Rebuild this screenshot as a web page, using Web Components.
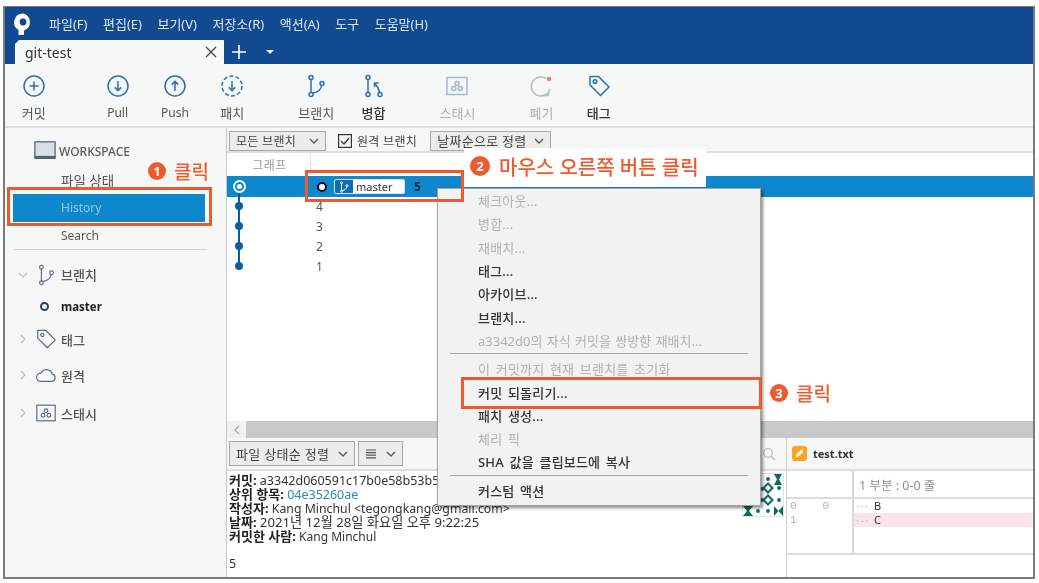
<!DOCTYPE html>
<html lang="ko">
<head>
<meta charset="utf-8">
<title>git-test</title>
<style>
  html, body { margin: 0; height: 100%; background: #fff; overflow: hidden; }
  body { font-family: "Noto Sans", "Noto Sans CJK KR", sans-serif; font-size: 12px; color: #444; }
</style>
</head>
<body>
<app-window>
  <title-bar></title-bar>
  <tool-bar>
    <tool-button icon="plus" label="커밋"></tool-button>
    <tool-button icon="pull" label="Pull" wide></tool-button>
    <tool-button icon="push" label="Push"></tool-button>
    <tool-button icon="patch" label="패치"></tool-button>
    <tool-button icon="branch" label="브랜치" wide></tool-button>
    <tool-button icon="merge" label="병합" strong></tool-button>
    <tool-button icon="stash" label="스태시" wide off></tool-button>
    <tool-button icon="discard" label="폐기" wide off></tool-button>
    <tool-button icon="tag" label="태그" strong></tool-button>
  </tool-bar>
  <div style="display:flex;flex:1;min-height:0">
    <side-bar></side-bar>
    <div style="display:flex;flex-direction:column;flex:1;min-width:0">
      <filter-bar></filter-bar>
      <history-list></history-list>
      <h-scroll></h-scroll>
      <div style="display:flex;flex:none;height:139px">
        <commit-detail></commit-detail>
        <diff-pane></diff-pane>
      </div>
    </div>
  </div>

  <callout-box style="left:2px;top:180px;width:205px;height:39px"></callout-box>
  <callout-box style="left:300px;top:163px;width:159px;height:32px"></callout-box>
  <callout-label num="❶" style="left:139px;top:148px">클릭</callout-label>

  <context-menu style="left:432px;top:181px"></context-menu>
  <callout-box style="left:456px;top:370px;width:301px;height:32px"></callout-box>
  <callout-label num="❸" style="left:761px;top:370px">클릭</callout-label>
  <callout-label num="❷" big style="left:459px;top:141px;width:242px;height:39px">마우스 오른쪽 버튼 클릭</callout-label>
</app-window>

<script>
const BLUE = '#2b70b4';
const ICONS = {
  plus: `<circle cx="12" cy="12" r="10"/><path d="M12 7.500v9M7.500 12h9"/>`,
  pull: `<circle cx="12" cy="12" r="10"/><path d="M12 7v9.500M8.800 13.400l3.200 3.200 3.200-3.200"/>`,
  push: `<circle cx="12" cy="12" r="10"/><path d="M12 17V7.500M8.800 10.600L12 7.400l3.200 3.200"/>`,
  patch: `<circle cx="12" cy="12" r="10" stroke-dasharray="4 2.300"/><path d="M12 7v9.500M8.800 13.400l3.200 3.200 3.200-3.200"/>`,
  branch: `<circle cx="7" cy="3.500" r="2"/><circle cx="7" cy="20.500" r="2"/><circle cx="18" cy="9.500" r="2"/><path d="M7 5.500v13M8.600 19.200c5-1 8.600-4 9-7.700"/>`,
  merge: `<circle cx="6" cy="3.500" r="2"/><circle cx="6" cy="20.500" r="2"/><circle cx="18" cy="20.500" r="2"/><path d="M6 5.500v13M17.600 18.500C17 15 15.500 12.500 13 9.500M12.500 13V9h4"/>`,
  stash: `<rect x="2" y="3.500" width="20" height="17"/><circle cx="12" cy="9.500" r="2"/><circle cx="8.800" cy="14.500" r="2"/><circle cx="15.200" cy="14.500" r="2"/>`,
  discard: `<path d="M17 4.500A9.500 9.500 0 1 0 21 15"/><path d="M12.500 21.500h6.500l1-5"/><circle cx="20" cy="5" r="2.300" fill="#f0806a" stroke="none"/>`,
  tag: `<path d="M3 2.500h8.500L22 13l-8.500 8.500L3 11z" stroke-linejoin="round"/><circle cx="8" cy="7.500" r="1.800"/>`,
  cloud: `<path d="M6 19h12a4 4 0 0 0 .8-7.900A6.500 6.500 0 0 0 6.500 10 4.500 4.500 0 0 0 6 19z"/>`,
  monitor: `<rect x="1" y="2" width="22" height="16" fill="#d9dee6"/><path d="M1 18h22v2H1z" fill="#5d6b80"/>`
};

class uiIcon extends HTMLElement {
  constructor() {
    super();
    this.attachShadow({ mode: "open" });
  }
  connectedCallback() {
    const size = this.getAttribute('size') || 24;
    const color = this.getAttribute('color') || BLUE;
    const sw = this.getAttribute('sw') || 1.5;
    this.shadowRoot.innerHTML = `
      <style>:host{display:inline-flex;flex:none;width:${size}px;height:${size}px} svg{display:block}</style>
      <svg width="${size}" height="${size}" viewBox="0 0 24 24" fill="none" stroke="${color}" stroke-width="${sw}">${ICONS[this.getAttribute('name')]}</svg>`;
  }
}
customElements.define("ui-icon", uiIcon);

class appWindow extends HTMLElement {
  constructor() {
    super();
    this.attachShadow({ mode: "open" }).innerHTML = `
      <style>
        :host{
          display:flex;
          flex-direction:column;
          position:relative;
          box-sizing:border-box;
          width:1032px;
          height:573px;
          margin:6px 0 0 3px;
          border:solid #7b7b7b;
          border-width:1px 2px 2px 2px;
          background:#fff;
          filter:blur(.4px);
        }
      </style>
      <slot></slot>`;
  }
}
customElements.define("app-window", appWindow);

class titleBar extends HTMLElement {
  constructor() {
    super();
    const items = ['파일(F)','편집(E)','보기(V)','저장소(R)','액션(A)','도구','도움말(H)'];
    this.attachShadow({ mode: "open" }).innerHTML = `
      <style>
        :host{display:block;flex:none;height:57px;background:#114a91;color:#dfe8f3}
        .menu{display:flex;align-items:center;height:33px;padding-left:7px;font-size:13px}
        .menu svg{margin-right:15px}
        .menu span{margin-right:15.500px;white-space:nowrap}
        .tabs{display:flex;align-items:center;height:24px;padding-left:10px;color:#fff}
        .tab{
          display:flex;align-items:center;justify-content:space-between;
          box-sizing:border-box;width:209px;height:24px;padding:0 7px 0 10px;
          background:#f6f8f7;color:#333;font-size:14px;
          clip-path:polygon(4px 0,100% 0,100% 100%,0 100%,0 4px);
        }
        .plus{margin-left:7px}
        .drop{margin-left:19px;width:0;height:0;border:4px solid transparent;border-top-color:#e8eef6;border-bottom:0}
      </style>
      <div class="menu">
        <svg width="22" height="24" viewBox="0 0 22 24">
          <path d="M11 1.500a8.800 8.800 0 0 0-4.500 16.400V23h5.500v-4.600A8.800 8.800 0 0 0 11 1.500z" fill="#fff"/>
          <circle cx="11" cy="10" r="3.400" fill="#114a91"/>
        </svg>
        ${items.map(i => `<span>${i}</span>`).join('')}
      </div>
      <div class="tabs">
        <div class="tab">git-test
          <svg width="12" height="12" viewBox="0 0 12 12" stroke="#444" stroke-width="1.300"><path d="M1 1l10 10M11 1L1 11"/></svg>
        </div>
        <svg class="plus" width="16" height="16" viewBox="0 0 16 16" stroke="#fff" stroke-width="1.600"><path d="M8 1v14M1 8h14"/></svg>
        <div class="drop"></div>
      </div>`;
  }
}
customElements.define("title-bar", titleBar);

class toolBar extends HTMLElement {
  constructor() {
    super();
    this.attachShadow({ mode: "open" }).innerHTML = `
      <style>
        :host{display:flex;flex:none;box-sizing:border-box;height:64px;background:#f6f8f7;border-bottom:2px solid #dedede}
      </style>
      <slot></slot>`;
  }
}
customElements.define("tool-bar", toolBar);

class toolButton extends HTMLElement {
  constructor() {
    super();
    this.attachShadow({ mode: "open" });
  }
  connectedCallback() {
    const off = this.hasAttribute('off');
    const name = this.getAttribute('icon');
    const text = this.getAttribute('label');
    let color = off ? '#9db9d6' : BLUE;
    if (name === 'discard') color = '#b9bdc0';
    const label = off ? '#adadad' : this.hasAttribute('strong') ? '#333' : '#555';
    this.shadowRoot.innerHTML = `
      <style>
        :host{
          display:flex;flex-direction:column;align-items:center;flex:none;
          width:57.300px;padding-top:10px;box-sizing:border-box;
          margin-left:${this.hasAttribute('wide') ? 26.700 : 0}px;
        }
        span{margin-top:7px;font-size:${/[가-힣]/.test(text) ? 13 : 12}px;line-height:16px;color:${label};font-weight:${this.hasAttribute('strong') ? 500 : 400}}
      </style>
      <ui-icon name="${name}" color="${color}"></ui-icon>
      <span>${text}</span>`;
  }
}
customElements.define("tool-button", toolButton);

class sideBar extends HTMLElement {
  constructor() {
    super();
    const chev = (open) => `<svg class="chev" width="10" height="10" viewBox="0 0 10 10" fill="none" stroke="#bbb" stroke-width="1.200"><path d="${open ? 'M1 3l4 4 4-4' : 'M3 1l4 4-4 4'}"/></svg>`;
    this.attachShadow({ mode: "open" }).innerHTML = `
      <style>
        :host{display:block;flex:none;box-sizing:border-box;width:222px;padding-top:10px;background:#f6f8f7;border-right:1px solid #c8c8c8;color:#555}
        .row{display:flex;align-items:center}
        .ws{height:26px;margin-bottom:2.500px;padding-left:29px;gap:3px;font-size:12px;font-weight:500;color:#5b5b5b}
        .item{height:27.500px;padding-left:56px;font-size:12px}
        .sel{margin:0 21px 0 8px;padding-left:48px;background:#0f87cc;color:#93c9ea}
        hr{margin:0 19px 0 9px;border:0;border-top:1px solid #d4d4d4;height:0}
        .head{padding-left:13px;font-size:13px;font-weight:500;color:#555}
        .chev{margin-right:7px}
        .head ui-icon{margin-right:4px}
        .master{height:32px;padding-left:35px;gap:12px;color:#222;font-weight:700;font-size:11.500px}
        .dot{width:5px;height:5px;border:2px solid #2c4160;border-radius:50%}
      </style>
      <div class="row ws"><ui-icon name="monitor" color="#4d5c72" size="22" sw="1.300"></ui-icon>WORKSPACE</div>
      <div class="row item" style="font-size:13.500px">파일 상태</div>
      <div class="row item sel">History</div>
      <div class="row item">Search</div>
      <hr>
      <div class="row head" style="height:31px;margin-top:9px">${chev(true)}<ui-icon name="branch" color="#5c6c84" size="22" sw="1.300"></ui-icon>브랜치</div>
      <div class="row master"><span class="dot"></span>master</div>
      <div class="row head" style="height:34px">${chev()}<ui-icon name="tag" color="#5c6c84" size="22" sw="1.300"></ui-icon>태그</div>
      <div class="row head" style="height:38px">${chev()}<ui-icon name="cloud" color="#5c6c84" size="22" sw="1.300"></ui-icon>원격</div>
      <div class="row head" style="height:38px">${chev()}<ui-icon name="stash" color="#5c6c84" size="22" sw="1.300"></ui-icon>스태시</div>`;
  }
}
customElements.define("side-bar", sideBar);

const BTN_STYLES = `
  .btn{
    display:inline-flex;align-items:center;justify-content:space-between;box-sizing:border-box;
    border:1px solid #a9a9a9;background:#ececec;color:#444;font-size:12px;letter-spacing:.3px;white-space:nowrap;
  }
`;
const DOWN = `<svg width="10" height="10" viewBox="0 0 10 10" fill="none" stroke="#555" stroke-width="1.300"><path d="M1 3l4 4 4-4"/></svg>`;

class filterBar extends HTMLElement {
  constructor() {
    super();
    this.attachShadow({ mode: "open" }).innerHTML = `
      <style>
        ${BTN_STYLES}
        :host{display:flex;align-items:center;flex:none;box-sizing:border-box;height:25px;padding:2px 0 0 2px;background:#f6f8f7;border-bottom:2px solid #dedede}
        .btn{height:20px;padding:0 6px}
        .check{display:flex;align-items:center;gap:5px;margin:0 13px 0 12px;font-size:12px;letter-spacing:.3px;color:#444}
        .box{width:14px;height:14px}
      </style>
      <div class="btn" style="width:97px">모든 브랜치 ${DOWN}</div>
      <div class="check">
        <svg class="box" viewBox="0 0 14 14" fill="none" stroke="#333" stroke-width="1.200"><rect x=".6" y=".6" width="12.800" height="12.800"/><path d="M3 7l3 3 5-6"/></svg>
        원격 브랜치
      </div>
      <div class="btn" style="width:121px;font-size:13px">날짜순으로 정렬 ${DOWN}</div>`;
  }
}
customElements.define("filter-bar", filterBar);

class historyList extends HTMLElement {
  constructor() {
    super();
    const rows = ['4','3','2','1'];
    this.attachShadow({ mode: "open" }).innerHTML = `
      <style>
        :host{display:block;flex:1;min-height:0;background:#fff;color:#555}
        .head{display:grid;grid-template-columns:84px 1fr;height:22px;margin-bottom:1px;color:#999;font-size:12px;letter-spacing:.5px}
        .head div:first-child{display:flex;align-items:center;justify-content:center;border-right:1px solid #e2e2e2;padding:2px 0 0 2px}
        .row{display:grid;grid-template-columns:84px 1fr;align-items:center;height:20px;font-size:12px}
        .sel{background:#0f87cc;height:21px;margin-bottom:-1px;position:relative}
        .g{position:relative;height:100%;display:flex;align-items:center;padding-left:8px}
        .dot{width:8px;height:8px;border-radius:50%;background:#0b5f9e;position:relative;z-index:1}
        .g::before{content:"";position:absolute;left:11px;width:2px;top:-10px;height:20px;background:#0b5f9e}
        .first .g::before{top:-3px;height:13px}
        .sel .g::before{display:none}
        .ring{box-sizing:border-box;width:13px;height:13px;margin-left:-2.500px;border:2px solid #fff;border-radius:50%;display:flex;align-items:center;justify-content:center}
        .ring i{width:5px;height:5px;background:#fff;border-radius:50%}
        .t{padding-left:5px}
        .info{display:flex;align-items:center;padding-left:6px;color:#12283c}
        .cur{box-sizing:border-box;width:10px;height:10px;border:2.500px solid #111;background:#fff;border-radius:50%;margin-right:7px}
        .chip{display:flex;align-items:center;box-sizing:border-box;width:71px;height:15px;background:#fff;border:1px solid #cfe3f1;border-radius:2px;font-size:11px;color:#333;margin-right:9px;overflow:hidden}
        .chip b{display:flex;align-items:center;justify-content:center;width:18px;height:100%;background:#0f6eaf;margin-right:3px}
        .num{font-weight:700;color:#12283c}
      </style>
      <div class="head"><div>그래프</div><div></div></div>
      <div class="row sel">
        <div class="g"><span class="ring"><i></i></span></div>
        <div class="info"><span class="cur"></span><span class="chip"><b><ui-icon name="branch" size="12" color="#fff" sw="2"></ui-icon></b>master</span><span class="num">5</span></div>
      </div>
      ${rows.map((r, n) => `<div class="row${n ? '' : ' first'}"><div class="g"><span class="dot"></span></div><div class="t">${r}</div></div>`).join('')}`;
  }
}
customElements.define("history-list", historyList);

class hScroll extends HTMLElement {
  constructor() {
    super();
    this.attachShadow({ mode: "open" }).innerHTML = `
      <style>
        :host{display:flex;flex:none;height:17px;background:#c9c9c9}
        div{display:flex;align-items:center;justify-content:center;width:19px;background:#f1f1f1}
      </style>
      <div><svg width="8" height="10" viewBox="0 0 8 10" fill="none" stroke="#aaa" stroke-width="1.300"><path d="M6 1L2 5l4 4"/></svg></div>`;
  }
}
customElements.define("h-scroll", hScroll);

class commitDetail extends HTMLElement {
  constructor() {
    super();
    const teal = '#0c6a58';
    // only the right part of the identicon shows past the menu
    const dots = [[26,6],[37,15],[37,27],[20,16],[20,27],[16,38],[26,38]]
      .map(p => `<circle cx="${p[0]}" cy="${p[1]}" r="1.900" fill="${teal}"/>`).join('');
    this.attachShadow({ mode: "open" }).innerHTML = `
      <style>
        ${BTN_STYLES}
        :host{display:flex;flex-direction:column;flex:none;box-sizing:border-box;width:560px;background:#fff;border-right:1px solid #cfcfcf}
        .bar{display:flex;align-items:center;gap:3px;flex:none;box-sizing:border-box;height:33px;padding:0 10px 0 2px;background:#f6f8f7;border-bottom:2px solid #dedede}
        .btn{height:25px;padding:0 6px}
        .search{margin-left:auto}
        .body{display:flex;flex:1;min-height:0}
        .text{flex:1;min-width:0;padding:2px 0 0 2px;font-size:12.500px;line-height:14px;color:#333;white-space:nowrap;overflow:hidden}
        .text div{height:14px}
        b{font-size:13px;font-weight:700;color:#222}
        a{color:#2e86c1;text-decoration:none}
        .id{flex:none;margin:2px 2px 0 0}
      </style>
      <div class="bar">
        <div class="btn" style="width:126px;font-size:13px">파일 상태순 정렬 ${DOWN}</div>
        <div class="btn" style="width:45px">
          <svg width="12" height="12" viewBox="0 0 12 12" stroke="#555" stroke-width="1.200"><path d="M1 2h10M1 4.600h10M1 7.200h10M1 9.800h10"/></svg>${DOWN}
        </div>
        <svg class="search" width="14" height="14" viewBox="0 0 14 14" fill="none" stroke="#bbb" stroke-width="1.200"><circle cx="6" cy="6" r="4.300"/><path d="M9 9l4 4"/></svg>
      </div>
      <div class="body">
        <div class="text">
          <div><b>커밋:</b> a3342d060591c17b0e58b53b5</div>
          <div><b>상위 항목:</b> <a>04e35260ae</a></div>
          <div><b>작성자:</b> <span style="font-size:12.300px">Kang Minchul &lt;tegongkang@gmail.com&gt;</span></div>
          <div><b>날짜:</b> <span style="font-size:13.200px">2021년 12월 28일 화요일 오후 9:22:25</span></div>
          <div><b>커밋한 사람:</b> <span style="font-size:12px">Kang Minchul</span></div>
          <div>&nbsp;</div>
          <div>5</div>
        </div>
        <svg class="id" width="42" height="44" viewBox="0 0 42 44">
          <rect x=".5" y=".5" width="41" height="43" fill="#fff" stroke="#e4e4e4"/>
          ${dots}
          <path d="M32 1h8l-3 5.500 3 5.500h-8l3-5.500z" fill="${teal}"/>
          <path d="M1 33h10l-4 5 4 5H1l4-5z" fill="${teal}"/>
          <path d="M32 33l4.500 5-4.500 5zM41 33l-4.500 5 4.500 5z" fill="${teal}"/>
          <path d="M26 10.500l4.500 4.500-4.500 4.500-4.500-4.500zM26 22.500l4.500 4.500-4.500 4.500-4.500-4.500z" fill="none" stroke="${teal}" stroke-width="2"/>
        </svg>
      </div>`;
  }
}
customElements.define("commit-detail", commitDetail);

class diffPane extends HTMLElement {
  constructor() {
    super();
    this.attachShadow({ mode: "open" }).innerHTML = `
      <style>
        :host{display:flex;flex-direction:column;flex:1;min-width:0;background:#fff}
        .head{display:flex;align-items:center;gap:6px;flex:none;box-sizing:border-box;height:33px;padding-left:5px;background:#f6f8f7;border-bottom:2px solid #dedede;color:#333;font-size:11px;font-weight:700}
        .file{display:flex;width:15px;height:15px;background:#f6a623;border-radius:3px;align-items:center;justify-content:center}
        .table{display:grid;grid-template-columns:67px 1fr;height:84px;box-sizing:border-box;border-bottom:2px solid #dcdcdc}
        .gutter{border-right:2px solid #d8d8d8}
        .top{height:26px;border-bottom:2px solid #dcdcdc;box-sizing:content-box}
        .hunk{display:flex;align-items:center;padding-left:5px;color:#8e8e8e;font-size:12.500px}
        .ln{display:flex;gap:26px;height:14px;padding-left:3px;font:11px/14px "Liberation Mono",monospace;color:#b0b0b0}
        .code{display:flex;height:14px;padding-left:2px;font:11px/14px "Noto Sans",sans-serif;color:#333;gap:4px}
        .code i{font-style:normal;color:#c0c0c0;letter-spacing:1.500px;width:14px}
        .del{background:#fbe4e7}
      </style>
      <div class="head">
        <span class="file"><svg width="11" height="11" viewBox="0 0 11 11"><path d="M2 9l.6-2.500L7.500 1.600l1.900 1.900-4.900 4.900z" fill="#fff"/></svg></span>
        test.txt
      </div>
      <div class="table">
        <div class="gutter">
          <div class="top"></div>
          <div class="ln"><span>0</span><span>0</span></div>
          <div class="ln"><span>1</span></div>
        </div>
        <div>
          <div class="top hunk">1 부분 : 0-0 줄</div>
          <div class="code"><i>···</i>B</div>
          <div class="code del"><i>·-·</i>C</div>
        </div>
      </div>`;
  }
}
customElements.define("diff-pane", diffPane);

class contextMenu extends HTMLElement {
  constructor() {
    super();
    const groups = [
      [['체크아웃...',1],['병합...',1],['재배치...',1],['태그...'],['아카이브...'],['브랜치...'],['a3342d0의 자식 커밋을 쌍방향 재배치...',1,1]],
      [['이 커밋까지 현재 브랜치를 초기화',1],['커밋 되돌리기...'],['패치 생성...'],['체리 픽',1],['SHA 값을 클립보드에 복사']],
      [['커스텀 액션']]
    ];
    this.attachShadow({ mode: "open" }).innerHTML = `
      <style>
        :host{
          display:block;position:absolute;z-index:2;box-sizing:border-box;width:324px;height:318px;
          background:#f2f2f2;border:1px solid #a5a5a5;box-shadow:2px 2px 3px rgba(0,0,0,.45);
        }
        .i{display:flex;align-items:center;height:23.300px;padding-left:40px;color:#333;font-size:13px;font-weight:500;letter-spacing:.2px;word-spacing:2px;white-space:pre}
        .off{color:#b1b1b1;font-weight:400}
        .tight{letter-spacing:0;word-spacing:1px}
        hr{margin:1px 12px 3px 12px;height:0;border:0;border-top:1px solid #a8a8a8}
      </style>
      ${groups.map(g => g.map(i => `<div class="i${i[1] ? ' off' : ''}${i[2] ? ' tight' : ''}">${i[0]}</div>`).join('')).join('<hr>')}`;
  }
}
customElements.define("context-menu", contextMenu);

class calloutBox extends HTMLElement {
  constructor() {
    super();
    this.attachShadow({ mode: "open" }).innerHTML = `
      <style>:host{display:block;position:absolute;z-index:3;box-sizing:border-box;border:3.500px solid #ee5a30;pointer-events:none}</style>`;
  }
}
customElements.define("callout-box", calloutBox);

class calloutLabel extends HTMLElement {
  constructor() {
    super();
    this.attachShadow({ mode: "open" });
  }
  connectedCallback() {
    const big = this.hasAttribute('big');
    const n = this.getAttribute('num');
    this.shadowRoot.innerHTML = `
      <style>
        :host{
          display:flex;align-items:center;gap:${big ? 9 : 8}px;position:absolute;z-index:3;box-sizing:border-box;
          padding:${big ? '0 0 3px 6px' : '2px 4px'};background:${big ? '#fff' : 'transparent'};
          color:#ee5a30;font-size:${big ? 20 : 19}px;font-weight:500;white-space:nowrap;
        }
        .n{display:flex;align-items:center;justify-content:center;width:${big ? 20 : 18}px;height:${big ? 20 : 18}px;border-radius:50%;background:#ee5a30;color:#fff;font-size:13px;font-weight:700}
      </style>
      <span class="n">${{'❶':'1','❷':'2','❸':'3'}[n]}</span><slot></slot>`;
  }
}
customElements.define("callout-label", calloutLabel);
</script>
</body>
</html>
